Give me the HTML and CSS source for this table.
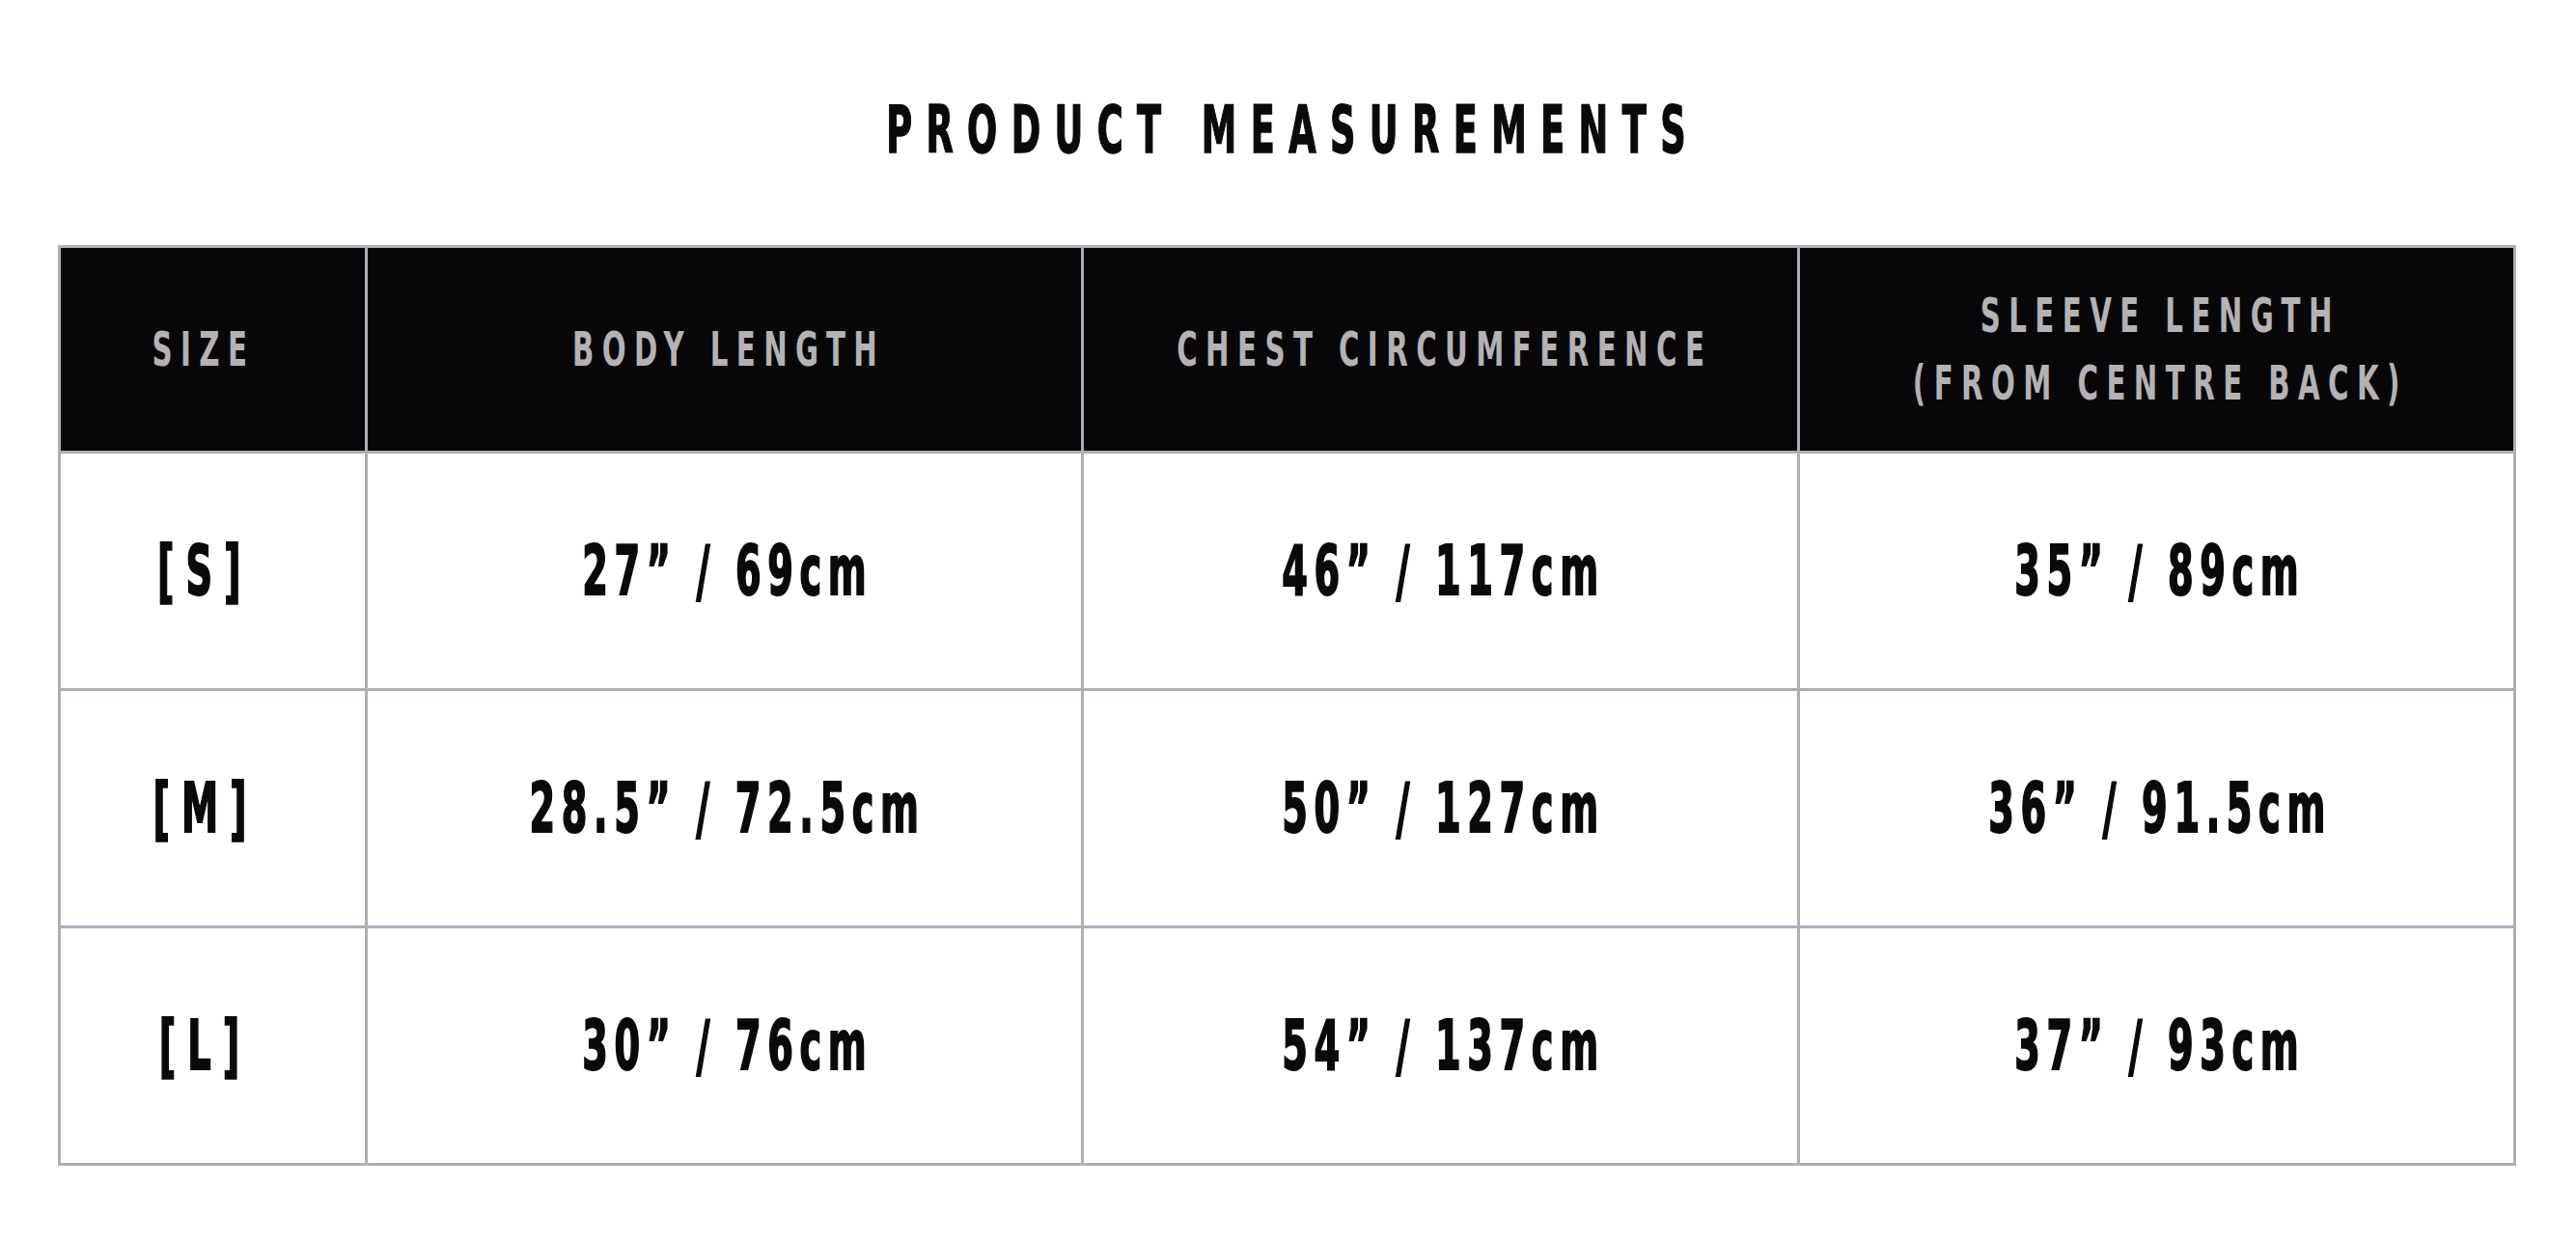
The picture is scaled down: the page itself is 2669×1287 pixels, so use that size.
FILE: index.html
```html
<!DOCTYPE html>
<html lang="en">
<head>
<meta charset="utf-8">
<title>Product Measurements</title>
<link rel="stylesheet" href="styles.css">
</head>
<body>
<main class="page">
  <h1 class="title"><span class="cond">PRODUCT MEASUREMENTS</span></h1>
  <table class="sizes">
    <colgroup>
      <col class="col-size">
      <col class="col-m">
      <col class="col-m">
      <col class="col-m">
    </colgroup>
    <thead>
      <tr>
        <th class="size-cell"><span class="cond">SIZE</span></th>
        <th><span class="cond">BODY LENGTH</span></th>
        <th><span class="cond">CHEST CIRCUMFERENCE</span></th>
        <th><span class="cond">SLEEVE LENGTH<br>(FROM CENTRE BACK)</span></th>
      </tr>
    </thead>
    <tbody>
      <tr>
        <td class="size-cell"><span class="cond">[S]</span></td>
        <td><span class="cond">27” / 69cm</span></td>
        <td><span class="cond">46” / 117cm</span></td>
        <td><span class="cond">35” / 89cm</span></td>
      </tr>
      <tr>
        <td class="size-cell"><span class="cond">[M]</span></td>
        <td><span class="cond">28.5” / 72.5cm</span></td>
        <td><span class="cond">50” / 127cm</span></td>
        <td><span class="cond">36” / 91.5cm</span></td>
      </tr>
      <tr>
        <td class="size-cell"><span class="cond">[L]</span></td>
        <td><span class="cond">30” / 76cm</span></td>
        <td><span class="cond">54” / 137cm</span></td>
        <td><span class="cond">37” / 93cm</span></td>
      </tr>
    </tbody>
  </table>
</main>
</body>
</html>
```

FILE: styles.css
```css
html, body {
  margin: 0;
  padding: 0;
  background: #ffffff;
}

.page {
  width: 2669px;
  height: 1287px;
  padding: 0 64px 0 60px;
  box-sizing: border-box;
  font-family: "DejaVu Sans Condensed", "DejaVu Sans", "Liberation Sans", sans-serif;
  font-stretch: condensed;
}

.cond {
  display: inline-block;
  margin: 0 -200px;
  transform-origin: 50% 50%;
  white-space: nowrap;
}

.title {
  margin: 0;
  height: 254px;
  box-sizing: border-box;
  padding-top: 93px;
  text-align: center;
  font-size: 68px;
  line-height: 84px;
  font-weight: 700;
  color: #0a0a0a;
}

.title .cond {
  letter-spacing: 24px;
  padding-left: 24px;
  transform: scaleX(0.6);
  -webkit-text-stroke: 1.5px #0a0a0a;
}

.sizes {
  width: 2545px;
  border-collapse: collapse;
  table-layout: fixed;
}

.col-size { width: 318px; }
.col-m { width: 742px; }

.sizes th,
.sizes td {
  border: 3px solid #aab0b5;
  text-align: center;
  vertical-align: middle;
  padding: 0;
}

.sizes .size-cell {
  padding-right: 28px;
}

.sizes th {
  height: 210px;
  background: #070709;
  color: #b4b2b4;
  font-size: 50px;
  line-height: 70px;
  font-weight: 700;
}

.sizes th .cond {
  letter-spacing: 13px;
  padding-left: 13px;
  transform: scaleX(0.65);
}

.sizes td {
  height: 243px;
  color: #0a0a0a;
  font-size: 71px;
  font-weight: 700;
}

.sizes td .cond {
  letter-spacing: 11px;
  padding-left: 11px;
  transform: scaleX(0.6);
  -webkit-text-stroke: 2px #0a0a0a;
}

.sizes td.size-cell .cond {
  letter-spacing: 20px;
  padding-left: 20px;
}
```
